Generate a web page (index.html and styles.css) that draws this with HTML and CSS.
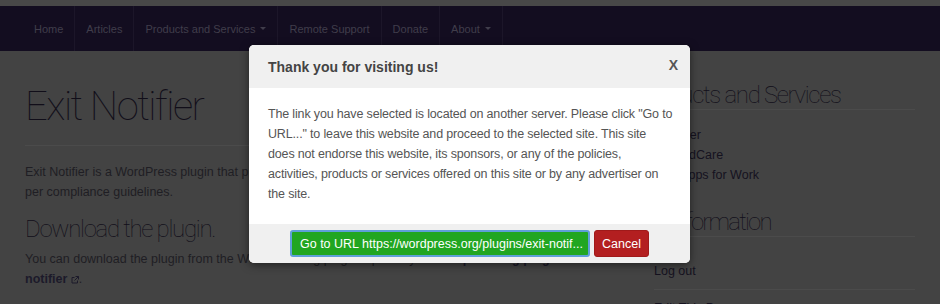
FILE: index.html
```html
<!DOCTYPE html>
<html lang="en">
<head>
<meta charset="utf-8">
<title>Exit Notifier</title>
<link rel="stylesheet" href="styles.css">
</head>
<body>
<div class="topstrip"></div>
<nav class="navbar">
  <ul class="nav">
    <li class="nav-item">Home</li>
    <li class="nav-item">Articles</li>
    <li class="nav-item">Products and Services <span class="caret"></span></li>
    <li class="nav-item">Remote Support</li>
    <li class="nav-item">Donate</li>
    <li class="nav-item">About <span class="caret"></span></li>
  </ul>
</nav>
<div class="container">
  <main class="main">
    <h1 class="page-title">Exit Notifier</h1>
    <hr class="rule">
    <p class="text">Exit Notifier is a WordPress plugin that provides a friendly notice to visitors when they leave your site, as per compliance guidelines.</p>
    <h2 class="section-title">Download the plugin.</h2>
    <p class="text">You can download the plugin from the WordPress.org plugin repository at <a class="link">wordpress.org/plugins/exit-notifier</a> <svg class="ext" width="8" height="8" viewBox="0 0 8 8" aria-hidden="true"><path d="M3.5 1.5H1v5.5h5.5V4.5" fill="none" stroke="#1c1a2a" stroke-width="1"/><path d="M4.5 0.5h3v3M7.5 0.5L3.5 4.5" fill="none" stroke="#1c1a2a" stroke-width="1"/></svg>.</p>
  </main>
  <aside class="sidebar">
    <h3 class="widget-title">Products and Services</h3>
    <ul class="widget-list">
      <li>Exit Notifier</li>
      <li>TechCloudCare</li>
      <li>Google Apps for Work</li>
    </ul>
    <h3 class="widget-title">My Information</h3>
    <ul class="meta-list">
      <li>Log out</li>
      <li>Edit This Page</li>
    </ul>
  </aside>
</div>

<div class="modal">
  <div class="modal-header">
    <span class="modal-title">Thank you for visiting us!</span>
    <span class="modal-close">X</span>
  </div>
  <div class="modal-body">
    The link you have selected is located on another server. Please click "Go to URL..." to leave this website and proceed to the selected site. This site does not endorse this website, its sponsors, or any of the policies, activities, products or services offered on this site or by any advertiser on the site.
  </div>
  <div class="modal-footer">
    <span class="btn btn-go">Go to URL https://wordpress.org/plugins/exit-notif...</span>
    <span class="btn btn-cancel">Cancel</span>
  </div>
</div>
</body>
</html>
```

FILE: styles.css
```css
html, body {
  margin: 0;
  padding: 0;
}
body {
  width: 940px;
  height: 304px;
  overflow: hidden;
  background: #434343;
  font-family: "Liberation Sans", Arial, sans-serif;
  font-size: 12.5px;
  line-height: 20px;
  color: #1e1e22;
  position: relative;
}
.topstrip {
  height: 6px;
  background: #484848;
}
.navbar {
  height: 45px;
  background: #130d20;
  padding-left: 23px;
}
.nav {
  display: flex;
  margin: 0;
  padding: 0;
  list-style: none;
  height: 100%;
}
.nav-item {
  display: flex;
  align-items: center;
  padding: 0 11px;
  font-size: 11px;
  color: #403d4b;
  border-right: 1px solid #1c1629;
  height: 100%;
  box-sizing: border-box;
  white-space: nowrap;
}
.caret {
  display: inline-block;
  width: 0;
  height: 0;
  margin-left: 5px;
  border-top: 3px solid #403d4b;
  border-left: 3px solid transparent;
  border-right: 3px solid transparent;
}
.container {
  display: grid;
  grid-template-columns: 590px 278px;
  column-gap: 22px;
  padding: 0 25px;
}
.page-title {
  font-family: Roboto, "Liberation Sans", sans-serif;
  font-weight: 100;
  font-size: 40px;
  letter-spacing: -1.5px;
  line-height: 46px;
  margin: 33px 0 0;
  color: #110e19;
}
.rule {
  border: 0;
  border-top: 1px solid #4b4b4b;
  margin: 15px 0 16px;
}
.text {
  margin: 0;
  color: #1f1e24;
}
.section-title {
  font-family: Roboto, "Liberation Sans", sans-serif;
  font-weight: 100;
  font-size: 24px;
  letter-spacing: -1.3px;
  line-height: 26px;
  margin: 14px 0 7px;
  color: #110e19;
}
.link {
  color: #1c1a2a;
  font-weight: bold;
}
.ext {
  vertical-align: -1px;
}
.widget-title {
  font-family: Roboto, "Liberation Sans", sans-serif;
  font-weight: 100;
  font-size: 24px;
  letter-spacing: -1.3px;
  line-height: 26px;
  margin: 31px 0 0;
  padding-bottom: 1px;
  border-bottom: 1px solid #4b4b4b;
  color: #110e19;
}
.widget-list {
  list-style: none;
  margin: 15px 0 0;
  padding: 0;
  color: #15121f;
}
.widget-list + .widget-title {
  margin-top: 24px;
  letter-spacing: -1.8px;
}
.meta-list {
  list-style: none;
  margin: 24px 0 0;
  padding: 0 0 0 17px;
  color: #15121f;
}
.meta-list li {
  padding-bottom: 8px;
  border-bottom: 1px solid #4b4b4b;
  margin-bottom: 8px;
}
.modal {
  position: absolute;
  left: 249px;
  top: 45px;
  width: 441px;
  border-radius: 5px;
  overflow: hidden;
  background: #fff;
  box-shadow: 0 2px 8px rgba(0, 0, 0, 0.5);
}
.modal-header {
  display: flex;
  justify-content: space-between;
  align-items: center;
  height: 43px;
  padding: 0 12px 0 19px;
  background: #f0f0f0;
}
.modal-title {
  font-size: 14px;
  font-weight: bold;
  color: #444;
}
.modal-close {
  font-size: 14px;
  font-weight: bold;
  color: #555;
  margin-top: -3px;
}
.modal-body {
  padding: 16px 17px 20px 19px;
  color: #555;
  line-height: 20px;
  letter-spacing: -0.16px;
}
.modal-footer {
  display: flex;
  justify-content: center;
  gap: 4px;
  padding: 6px 0;
  background: #f0f0f0;
}
.btn {
  display: inline-flex;
  align-items: center;
  height: 27px;
  box-sizing: border-box;
  color: #fff;
  border-radius: 3px;
  white-space: nowrap;
  overflow: hidden;
}
.btn-go {
  width: 300px;
  padding: 0 8px;
  background: #21a621;
  border: 2px solid #5f9fd8;
}
.btn-cancel {
  width: 55px;
  justify-content: center;
  background: #b31f20;
  border: 1px solid #a01a1a;
}
```
